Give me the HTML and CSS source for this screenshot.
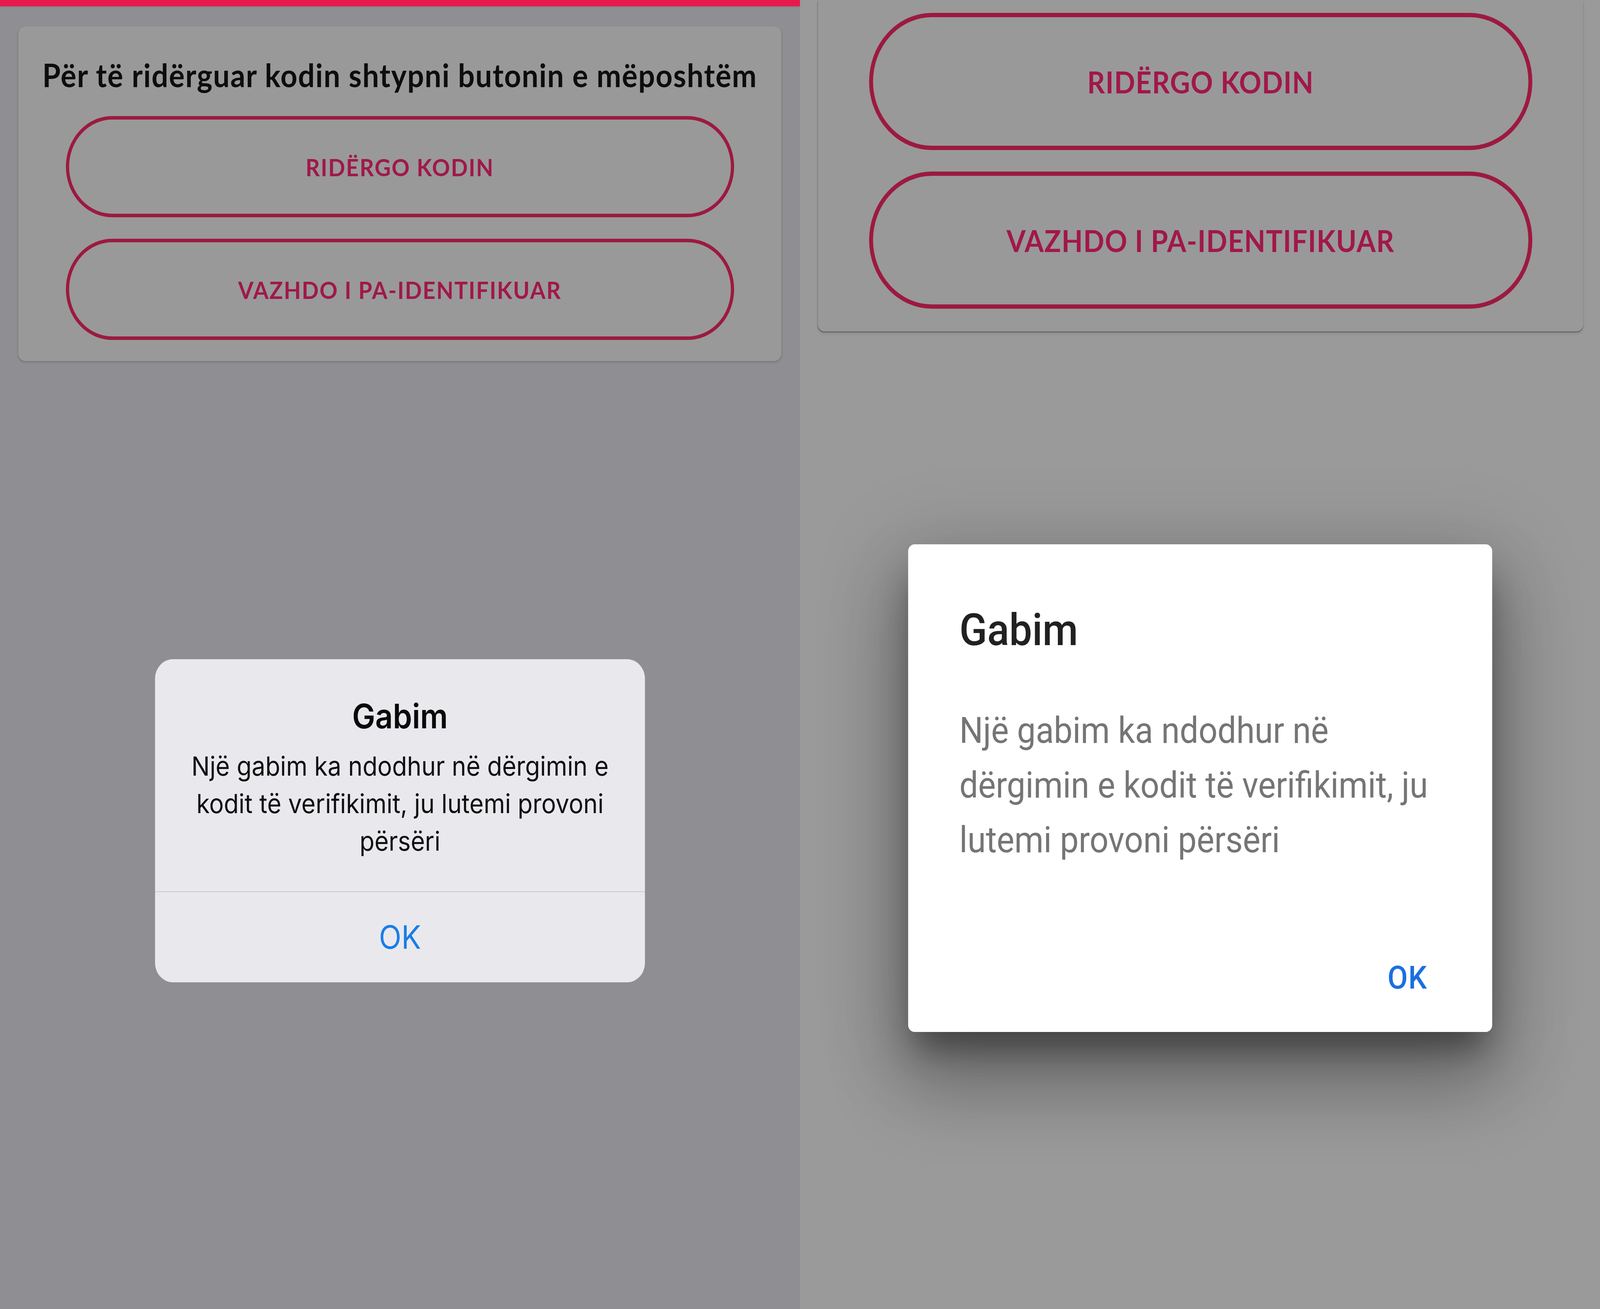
FILE: index.html
```html
<!DOCTYPE html>
<html lang="sq">
<head>
<meta charset="utf-8">
<title>Gabim</title>
<link rel="stylesheet" href="styles.css">
</head>
<body>
<div class="frame">
<div class="screens">
  <section class="panel panel-ios">
    <div class="topbar"></div>
    <div class="card card-ios">
      <p class="card-title">Për të ridërguar kodin shtypni butonin e mëposhtëm</p>
      <button class="outline outline-ios">RIDËRGO KODIN</button>
      <button class="outline outline-ios second-ios">VAZHDO I PA-IDENTIFIKUAR</button>
    </div>
    <div class="ios-alert">
      <h2 class="ios-title">Gabim</h2>
      <p class="ios-msg">Një gabim ka ndodhur në dërgimin e kodit të verifikimit, ju lutemi provoni përsëri</p>
      <div class="ios-sep"></div>
      <div class="ios-action">OK</div>
    </div>
  </section>
  <section class="panel panel-android">
    <div class="card card-android">
      <button class="outline outline-android">RIDËRGO KODIN</button>
      <button class="outline outline-android second-android">VAZHDO I PA-IDENTIFIKUAR</button>
    </div>
    <div class="md-dialog">
      <h2 class="md-title">Gabim</h2>
      <p class="md-msg">Një gabim ka ndodhur në dërgimin e kodit të verifikimit, ju lutemi provoni përsëri</p>
      <div class="md-spacer"></div>
      <div class="md-actions"><span class="md-ok">OK</span></div>
    </div>
  </section>
</div>
</div>
</body>
</html>
```
FILE: styles.css
```css
* { box-sizing: border-box; }
html, body { margin: 0; padding: 0; overflow: hidden; }
html { background: #8e8e93; }
body { width: 100%; height: 3350px; }

.frame { width: 100%; height: 3350px; overflow: clip; }
.screens { display: flex; width: 4468px; height: 3350px; transform: scaleX(0.916741); transform-origin: 0 0; }
.panel { position: relative; width: 2234px; height: 3350px; overflow: hidden; display: flex; flex-direction: column; flex: none; }
.panel-ios { background: #8e8e93; }
.panel-android { background: #9a9a9a; }

.topbar { height: 16px; background: #e8194d; box-shadow: 0 2px 3px rgba(120,120,125,0.6); flex: none; }

.card { background: #999999; display: flex; flex-direction: column; align-items: center; flex: none; }
.card-ios { margin: 52px 52px 0 51px; height: 856px; padding-top: 74px; border-radius: 20px; box-shadow: 0 3px 5px rgba(0,0,0,0.18); }
.card-android { margin: 0 47px 0 50px; height: 848px; padding-top: 33px; border-radius: 0 0 18px 18px; box-shadow: 0 3px 2px rgba(0,0,0,0.28), 0 6px 8px rgba(0,0,0,0.08); }

.card-title { margin: 0; font-family: "Lato", "Liberation Sans", sans-serif; font-weight: 700; font-size: 82px; line-height: 98px; letter-spacing: 2px; color: #0d0d0d; white-space: nowrap; }

.outline { display: flex; align-items: center; justify-content: center; background: transparent; border-style: solid; border-color: #9c1a40; border-radius: 400px; font-family: "Lato", "Liberation Sans", sans-serif; font-weight: 700; color: #a0184a; padding: 0; flex: none; }
.outline-ios { width: 1866px; height: 259px; border-width: 9px; font-size: 62px; letter-spacing: 2.5px; margin-top: 57px; }
.second-ios { margin-top: 55px; }
.outline-android { width: 1852px; height: 351px; border-width: 11px; font-size: 77px; letter-spacing: 1.5px; margin-top: 0; }
.second-android { margin-top: 55px; }

/* iOS alert */
.ios-alert { position: absolute; left: 433px; top: 1687px; width: 1368px; height: 827px; background: #e9e9ed; border-radius: 50px; display: flex; flex-direction: column; align-items: center; padding-top: 94px; font-family: "Inter", "Liberation Sans", sans-serif; }
.ios-title { margin: 0; font-size: 86px; font-weight: 600; line-height: 104px; color: #0a0a0a; }
.ios-msg { margin: 27px 0 0; padding: 0 70px; font-size: 68px; font-weight: 400; line-height: 96px; color: #0f0f0f; text-align: center; height: 288px; flex: none; }
.ios-sep { align-self: stretch; height: 2px; background: #c9c9cd; margin-top: 81px; flex: none; }
.ios-action { flex: 1; display: flex; align-items: center; justify-content: center; font-size: 82px; color: #1a7de8; font-weight: 400; }

/* Material dialog */
.md-dialog { position: absolute; left: 302px; top: 1393px; width: 1631px; height: 1248px; background: #ffffff; border-radius: 18px; display: flex; flex-direction: column; padding: 152px 143px 91px 143px; font-family: "Roboto", "Liberation Sans", sans-serif; box-shadow: 0 60px 80px -20px rgba(0,0,0,0.38), 0 130px 200px 20px rgba(0,0,0,0.24), 0 40px 220px 40px rgba(0,0,0,0.15); }
.md-title { margin: 0; font-size: 114px; font-weight: 500; line-height: 134px; color: #212121; }
.md-msg { margin: 121px 0 0; font-size: 93px; font-weight: 400; line-height: 140px; color: #757575; }
.md-spacer { flex: 1; }
.md-actions { display: flex; justify-content: flex-end; margin-right: 38px; }
.md-ok { font-size: 82px; font-weight: 500; line-height: 96px; color: #1b6fe0; letter-spacing: 1.5px; }
```
